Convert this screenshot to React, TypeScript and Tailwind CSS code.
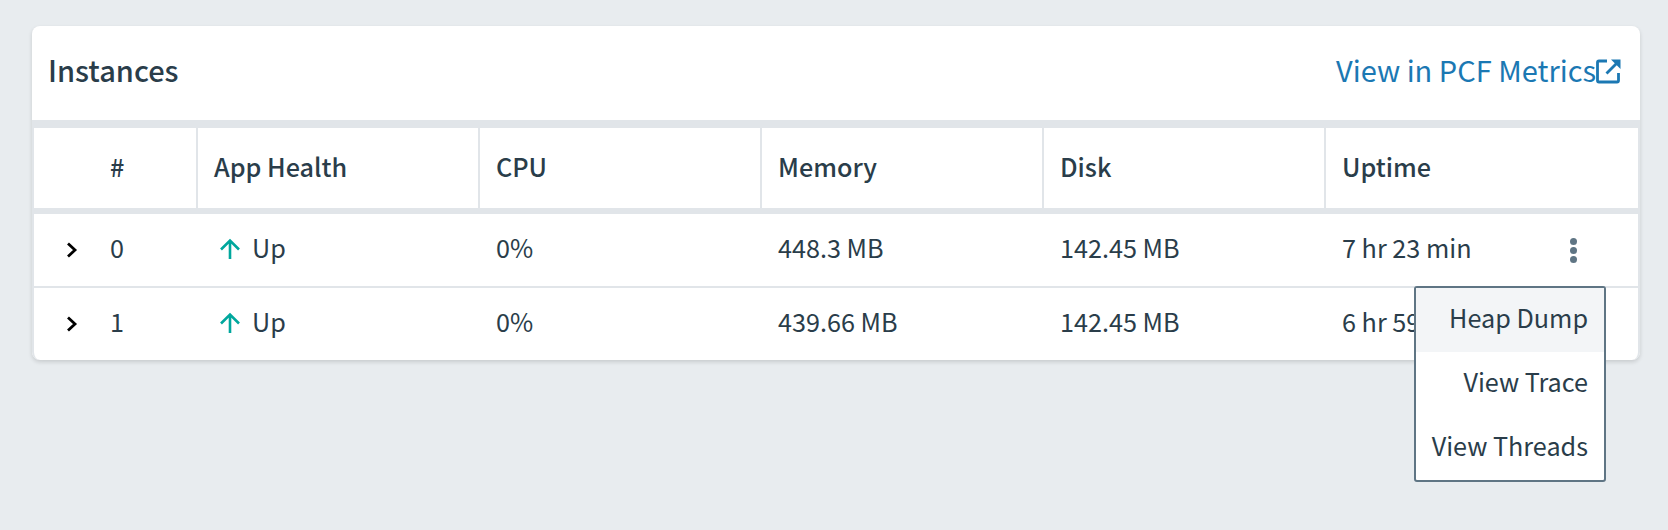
const FONT = "font-['Noto_Sans_CJK_SC','Source_Sans_Pro','Noto_Sans',sans-serif]";

const cols = "grid grid-cols-[164px_282px_282px_282px_282px_1fr]";

function Chevron() {
  return (
    <svg width="14" height="18" viewBox="0 0 14 18" fill="none" className="shrink-0">
      <path d="M3 2.5 L10 9 L3 15.5" stroke="#000" strokeWidth="2.8" />
    </svg>
  );
}

function UpArrow() {
  return (
    <svg width="22" height="22" viewBox="0 0 22 22" fill="none" className="shrink-0 mb-[2px]">
      <path d="M11 21 V3 M2 11.5 L11 2.5 L20 11.5" stroke="#00a79d" strokeWidth="2.6" />
    </svg>
  );
}

function ExternalLink() {
  return (
    <svg width="26" height="26" viewBox="0 0 26 26" fill="none" className="shrink-0">
      <path d="M11 3 H3 Q1.5 3 1.5 4.5 V22.5 Q1.5 24 3 24 H21 Q22.5 24 22.5 22.5 V15" stroke="#1b78b3" strokeWidth="2.8" />
      <path d="M10.5 15.5 L23 3" stroke="#1b78b3" strokeWidth="2.8" />
      <path d="M15 1.5 H24.5 V11 Z" fill="#1b78b3" />
    </svg>
  );
}

function Row({ n, cpu, mem, disk, up, kebab, last }: { n: string; cpu: string; mem: string; disk: string; up: string; kebab?: boolean; last?: boolean }) {
  return (
    <div className={`${cols} items-center ${last ? "h-[72px]" : "border-b-2 border-[#e1e5e9] h-[74px]"}`}>
      <div className="flex items-center pl-[31px]">
        <Chevron />
        <span className="ml-[31px] pb-[4px]">{n}</span>
      </div>
      <div className="flex items-center pl-[21px]">
        <UpArrow />
        <span className="ml-[11px] pb-[4px]">Up</span>
      </div>
      <div className="pl-[16px] pb-[4px]">{cpu}</div>
      <div className="pl-[16px] pb-[4px]">{mem}</div>
      <div className="pl-[16px] pb-[4px]">{disk}</div>
      <div className="pl-[16px] flex items-center justify-between pr-[56px]">
        <span className="pb-[4px]">{up}</span>
        {kebab ? (
          <span className="flex flex-col gap-[2px] mr-[5px] mt-[2px]">
            <span className="block w-[7px] h-[7px] rounded-full bg-[#5f7584]" />
            <span className="block w-[7px] h-[7px] rounded-full bg-[#5f7584]" />
            <span className="block w-[7px] h-[7px] rounded-full bg-[#5f7584]" />
          </span>
        ) : null}
      </div>
    </div>
  );
}

const heads = ["#", "App Health", "CPU", "Memory", "Disk", "Uptime"];

export default function App() {
  return (
    <div className={`${FONT} w-[1668px] h-[530px] bg-[#e8ecef] pt-[26px] pl-[32px] text-[#2a3d4a] text-[25.2px] overflow-hidden`}>
      <div className="relative w-[1608px] bg-white rounded-[8px] shadow-[0_2px_4px_rgba(0,0,0,0.14)]">
        <div className="h-[94px] flex items-center justify-between pl-[16px] pr-[16px]">
          <h2 className="text-[29px] font-medium pb-[6px]">Instances</h2>
          <a className="flex items-center text-[#1b78b3] text-[29px]">
            <span className="pb-[6px]">View in PCF Metrics</span>
            <span className="pb-[4px] pr-[2px]">
              <ExternalLink />
            </span>
          </a>
        </div>
        <div className="border-x-2 border-[#e1e5e9] rounded-b-[8px]">
          <div className={`${cols} h-[94px] border-y-[8px] border-b-[6px] border-[#e1e5e9] -mx-[2px] px-[2px] font-medium`}>
            {heads.map((h, i) => (
              <div
                key={h}
                className={`flex items-center pb-[2px] ${i === 0 ? "pl-[76px]" : "pl-[16px]"} ${i < 5 ? "border-r-2 border-[#e1e5e9]" : ""}`}
              >
                {h}
              </div>
            ))}
          </div>
          <Row n="0" cpu="0%" mem="448.3 MB" disk="142.45 MB" up="7 hr 23 min" kebab />
          <Row n="1" cpu="0%" mem="439.66 MB" disk="142.45 MB" up="6 hr 59 min" last />
        </div>
        <div className="absolute left-[1382px] top-[260px] w-[192px] border-2 border-[#5f7584] rounded-[3px] bg-white text-right">
          <div className="h-[64px] flex items-center justify-end pr-[16px] pb-[4px] bg-[#f3f5f7]">Heap Dump</div>
          <div className="h-[64px] flex items-center justify-end pr-[16px] pb-[4px]">View Trace</div>
          <div className="h-[64px] flex items-center justify-end pr-[16px] pb-[4px]">View Threads</div>
        </div>
      </div>
    </div>
  );
}
